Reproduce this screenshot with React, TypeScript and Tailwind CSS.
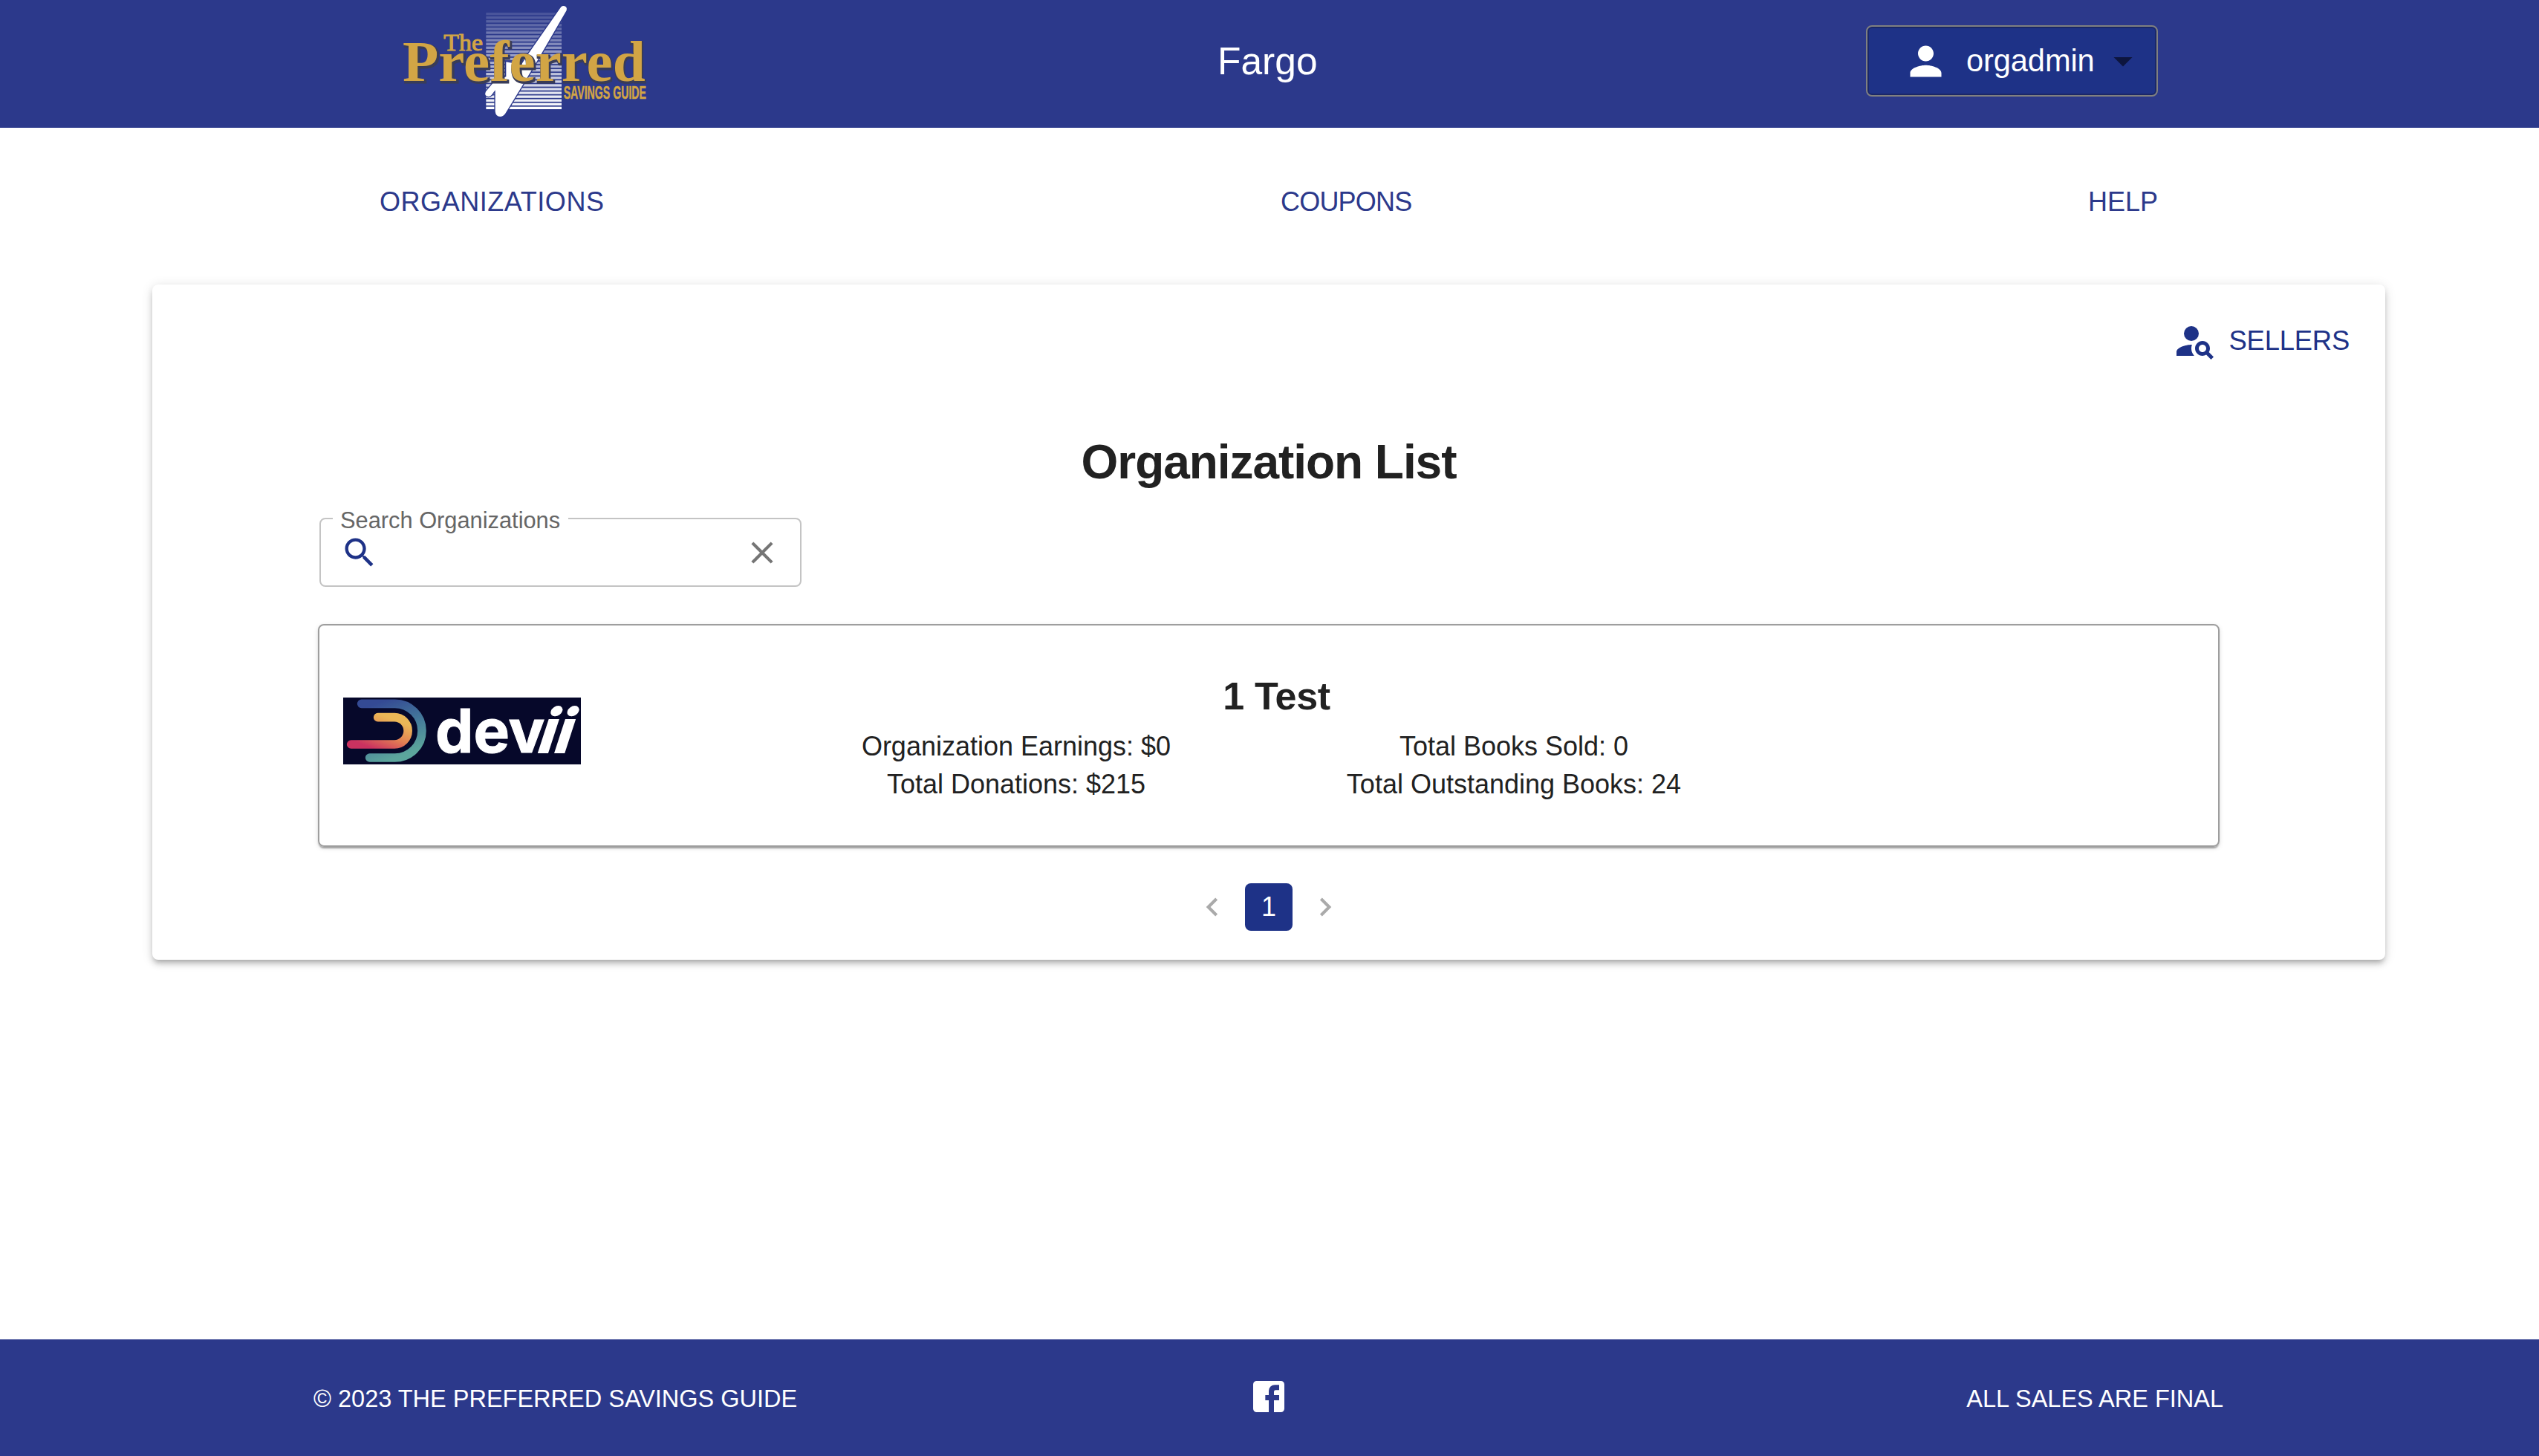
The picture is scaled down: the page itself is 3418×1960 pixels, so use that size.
import React from "react";

const STRIPES = Array.from({ length: 26 }, (_, i) => i);

function PreferredLogo() {
  return (
    <svg width="380" height="172" viewBox="0 0 1140 516" className="block shrink-0">
      {STRIPES.map((i) => (
        <rect key={i} x="403" y={51 + i * 15.2} width="305" height="10" fill="#ffffff" opacity={0.14 + (i / 25) * 0.86} />
      ))}
      <path
        d="M706 28 L572 220 L545 262 L484 250 L484 310 L440 325 L402 370 Q394 388 412 390 Q420 390 425 384 L440 364 L440 450 Q442 471 460 471 Q472 471 480 460 L550 345 L618 232 L728 42 Q732 26 716 24 Q710 24 706 28Z"
        fill="#ffffff"
        stroke="#2c398b"
        strokeWidth="8"
        paintOrder="stroke"
      />
      <g fontFamily="'Liberation Serif', serif" fontWeight="700">
        <text x="232" y="203" fontSize="92" fontWeight="400" fill="#d2a545" stroke="#d2a545" strokeWidth="3" textLength="158" lengthAdjust="spacingAndGlyphs">The</text>
        <text x="72" y="333" fontSize="234" fill="#393c58" stroke="#393c58" strokeWidth="9" textLength="976" lengthAdjust="spacingAndGlyphs">Preferred</text>
        <text x="66" y="328" fontSize="234" fill="#d2a545" textLength="980" lengthAdjust="spacingAndGlyphs">Preferred</text>
      </g>
      <text x="716" y="399" fontSize="71" fontFamily="'Liberation Sans', sans-serif" fontWeight="700" fill="#d2a545" stroke="#d2a545" strokeWidth="1.5" textLength="334" lengthAdjust="spacingAndGlyphs">SAVINGS GUIDE</text>
    </svg>
  );
}

function DeviiLogo() {
  return (
    <svg width="320" height="90" viewBox="156 357 960 270" className="mt-[97px] block shrink-0">
      <defs>
        <linearGradient id="outer" gradientUnits="userSpaceOnUse" x1="290" y1="382" x2="370" y2="600">
          <stop offset="0" stopColor="#344a94" />
          <stop offset="0.5" stopColor="#44799a" />
          <stop offset="1" stopColor="#5ca59c" />
        </linearGradient>
        <linearGradient id="inner" gradientUnits="userSpaceOnUse" x1="320" y1="430" x2="270" y2="560">
          <stop offset="0" stopColor="#ebb757" />
          <stop offset="0.5" stopColor="#e28253" />
          <stop offset="1" stopColor="#cb3260" />
        </linearGradient>
      </defs>
      <rect x="156" y="357" width="960" height="270" fill="#06082a" />
      <path d="M230 382 H365 A109 109 0 0 1 365 600 H263" fill="none" stroke="url(#outer)" strokeWidth="35" strokeLinecap="round" />
      <path d="M296 437 H363 A54.5 54.5 0 0 1 363 546 H188" fill="none" stroke="url(#inner)" strokeWidth="35" strokeLinecap="round" />
      <g fontFamily="Inter, sans-serif" fontWeight="700" fill="#ffffff" stroke="#ffffff" fontSize="242">
        <text x="528" y="580" strokeWidth="3" textLength="442" lengthAdjust="spacingAndGlyphs">dev</text>
        <text x="0" y="0" strokeWidth="6" transform="translate(930 580) skewX(-18)" textLength="134" lengthAdjust="spacingAndGlyphs">ii</text>
      </g>
    </svg>
  );
}

function Icon({ d, className }: { d: string; className: string }) {
  return (
    <svg viewBox="0 0 24 24" fill="currentColor" fillRule="evenodd" className={className}>
      <path d={d} />
    </svg>
  );
}

const PERSON = "M12 12c2.21 0 4-1.79 4-4s-1.79-4-4-4-4 1.79-4 4 1.79 4 4 4zm0 2c-2.67 0-8 1.34-8 4v2h16v-2c0-2.66-5.33-4-8-4z";
const ARROW_DOWN = "M7 10l5 5 5-5z";
const PERSON_SEARCH =
  "M10 4a4 4 0 1 0 0 8a4 4 0 1 0 0-8zM10.35 14.01C7.62 13.91 2 15.27 2 18v2h9.54c-2.47-2.76-1.23-5.89-1.19-5.99zm9.08 4.01c.36-.59.57-1.28.57-2.02 0-2.21-1.79-4-4-4s-4 1.79-4 4 1.79 4 4 4c.74 0 1.43-.22 2.02-.57L20.59 22 22 20.59l-2.57-2.57zM16 18c-1.1 0-2-.9-2-2s.9-2 2-2 2 .9 2 2-.9 2-2 2z";
const SEARCH =
  "M15.5 14h-.79l-.28-.27C15.41 12.59 16 11.11 16 9.5 16 5.91 13.09 3 9.5 3S3 5.91 3 9.5 5.91 16 9.5 16c1.61 0 3.09-.59 4.23-1.57l.27.28v.79l5 4.99L20.49 19l-4.99-5zm-6 0C7.01 14 5 11.99 5 9.5S7.01 5 9.5 5 14 7.01 14 9.5 11.99 14 9.5 14z";
const CLOSE = "M19 6.41L17.59 5 12 10.59 6.41 5 5 6.41 10.59 12 5 17.59 6.41 19 12 13.41 17.59 19 19 17.59 13.41 12z";
const BEFORE = "M15.41 7.41L14 6l-6 6 6 6 1.41-1.41L10.83 12z";
const NEXT = "M10 6L8.59 7.41 13.17 12l-4.58 4.59L10 18l6-6z";
const FACEBOOK =
  "M5 3h14a2 2 0 0 1 2 2v14a2 2 0 0 1-2 2H5a2 2 0 0 1-2-2V5a2 2 0 0 1 2-2zM18 5.200v3h-2a1 1 0 0 0-1 1v1.900h3v3h-3V21h-3v-6.900h-2v-3h2V8.700a3.500 3.500 0 0 1 3.500-3.500z";

export default function App() {
  return (
    <div className="flex min-h-[1960px] w-[3418px] flex-col bg-white font-['Liberation_Sans',Arial,sans-serif] text-[#212121]">
      <header className="flex h-[172px] items-start bg-[#2c398b] pl-[520px] text-white">
        <PreferredLogo />
        <div className="ml-[739px] pt-[52px] text-[51.5px] leading-[60px]">Fargo</div>
        <button className="mt-[34px] mr-[513px] ml-auto flex h-[96px] w-[393px] items-center rounded-lg border-2 border-[#808080] bg-[#1e3287] shadow-[inset_0_0_0_2px_#1a2768]">
          <Icon d={PERSON} className="ml-[47px] size-[63px]" />
          <span className="ml-[23px] text-[41.6px] leading-[48px] tracking-[-0.1px]">orgadmin</span>
          <Icon d={ARROW_DOWN} className="-mt-px ml-[8px] size-[60px] text-[#0d153e]" />
        </button>
      </header>

      <nav className="flex h-[199px] items-center justify-between pr-[513px] pl-[511px] text-[36px] leading-[44px] text-[#2c398b]">
        <a className="tracking-[0.55px]">ORGANIZATIONS</a>
        <a className="tracking-[-0.8px]">COUPONS</a>
        <a>HELP</a>
      </nav>

      <main className="mt-3 ml-[205px] flex h-[909px] w-[3006px] flex-col rounded-lg bg-white shadow-[0_6px_6px_-4px_rgba(0,0,0,0.2),0_6px_8px_0_rgba(0,0,0,0.14),0_2px_16px_0_rgba(0,0,0,0.12)]">
        <div className="mt-[46px] mr-[48px] flex h-[60px] items-center justify-end text-[#1e3287]">
          <Icon d={PERSON_SEARCH} className="size-[60px]" />
          <span className="ml-[16px] text-[36.4px] leading-[44px] tracking-[-0.2px]">SELLERS</span>
        </div>

        <h1 className="mt-[93px] text-center text-[64px] leading-[80px] font-bold tracking-[-1.05px]">Organization List</h1>

        <div className="relative mt-[35px] ml-[225px] flex h-[93px] w-[649px] items-center justify-between rounded-lg border-2 border-[#c4c4c4] px-[26px]">
          <span className="absolute -top-[20px] left-[16px] w-[317px] bg-white pl-[10px] text-[30.8px] leading-[44px] whitespace-nowrap text-[#666666]">Search Organizations</span>
          <Icon d={SEARCH} className="size-[52px] text-[#1e3287]" />
          <Icon d={CLOSE} className="size-[50px] text-[#757575]" />
        </div>

        <section className="mt-[50px] ml-[223px] flex h-[300px] w-[2560px] items-start rounded-lg border-2 border-[#9e9e9e] pl-[32px] shadow-[0_4px_2px_-2px_rgba(0,0,0,0.2),0_2px_2px_0_rgba(0,0,0,0.14),0_2px_6px_0_rgba(0,0,0,0.12)]">
          <DeviiLogo />
          <div className="mt-[63px] ml-[251px] w-[1340px] text-center">
            <h2 className="pl-[31px] text-[52px] leading-[64px] font-bold tracking-[-0.3px]">1 Test</h2>
            <div className="mt-[10px] grid grid-cols-2 text-[36px] leading-[51px]">
              <p>Organization Earnings: $0</p>
              <p>Total Books Sold: 0</p>
              <p>Total Donations: $215</p>
              <p>Total Outstanding Books: 24</p>
            </div>
          </div>
        </section>

        <div className="mt-[49px] flex h-[64px] items-center justify-center text-[#aaaaaa]">
          <Icon d={BEFORE} className="size-[50px]" />
          <div className="mx-[19px] size-[64px] rounded-lg bg-[#1e3287] text-center text-[36px] leading-[64px] text-white">1</div>
          <Icon d={NEXT} className="size-[50px]" />
        </div>
      </main>

      <footer className="mt-auto flex h-[157px] items-center justify-between bg-[#2c398b] pr-[425px] pl-[422px] text-[32.5px] leading-[40px] text-white">
        <span className="w-[680px] pt-[2px]">© 2023 THE PREFERRED SAVINGS GUIDE</span>
        <Icon d={FACEBOOK} className="-mt-[4px] size-[56px]" />
        <span className="w-[680px] pt-[2px] text-right">ALL SALES ARE FINAL</span>
      </footer>
    </div>
  );
}
